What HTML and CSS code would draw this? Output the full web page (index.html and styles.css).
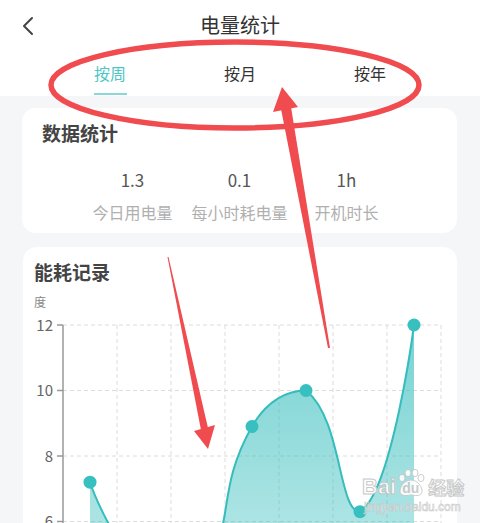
FILE: index.html
```html
<html lang="zh-CN">

<head>
    <meta charset="UTF-8">
    <meta name="viewport" content="width=device-width, initial-scale=1.0">
    <title>电量统计</title>
    <link rel="stylesheet" href="styles.css">
</head>

<body>
    <div class="screen">
        <div class="header">
            <div class="topbar">
                <svg class="back" width="14" height="22" viewBox="0 0 14 22">
                    <polyline points="11,3 3,11 11,19" fill="none" stroke="#444" stroke-width="2" stroke-linecap="round" stroke-linejoin="round" />
                </svg>
                <div class="title">电量统计</div>
            </div>
            <div class="tabs">
                <div class="tab active">按周</div>
                <div class="tab">按月</div>
                <div class="tab">按年</div>
            </div>
        </div>

        <div class="content">
            <div class="card stats-card">
                <div class="card-title">数据统计</div>
                <div class="stats">
                    <div class="stat">
                        <div class="stat-value">1.3</div>
                        <div class="stat-label">今日用电量</div>
                    </div>
                    <div class="stat">
                        <div class="stat-value">0.1</div>
                        <div class="stat-label">每小时耗电量</div>
                    </div>
                    <div class="stat">
                        <div class="stat-value">1h</div>
                        <div class="stat-label">开机时长</div>
                    </div>
                </div>
            </div>

            <div class="card chart-card">
                <div class="card-title">能耗记录</div>
                <div class="unit">度</div>
                <svg class="chart" width="424" height="240" viewBox="11 0 424 240">
                    <defs>
                        <linearGradient id="area" x1="0" y1="0" x2="0" y2="1">
                            <stop offset="0" stop-color="#3cbfbf" stop-opacity="0.7" />
                            <stop offset="1" stop-color="#3cbfbf" stop-opacity="0.3" />
                        </linearGradient>
                    </defs>
                    <!-- grid -->
                    <g stroke="#dcdcdc" stroke-width="1" stroke-dasharray="4 3">
                        <line x1="40" y1="15" x2="418" y2="15" />
                        <line x1="40" y1="80.5" x2="418" y2="80.5" />
                        <line x1="40" y1="146" x2="418" y2="146" />
                        <line x1="40" y1="211.5" x2="418" y2="211.5" />
                        <line x1="94" y1="15" x2="94" y2="240" />
                        <line x1="148" y1="15" x2="148" y2="240" />
                        <line x1="202" y1="15" x2="202" y2="240" />
                        <line x1="256" y1="15" x2="256" y2="240" />
                        <line x1="310" y1="15" x2="310" y2="240" />
                        <line x1="364" y1="15" x2="364" y2="240" />
                        <line x1="418" y1="15" x2="418" y2="240" />
                    </g>
                    <!-- axis -->
                    <g stroke="#999" stroke-width="1.5">
                        <line x1="40" y1="15" x2="40" y2="240" />
                        <line x1="34" y1="15" x2="40" y2="15" />
                        <line x1="34" y1="80.5" x2="40" y2="80.5" />
                        <line x1="34" y1="146" x2="40" y2="146" />
                        <line x1="34" y1="211.5" x2="40" y2="211.5" />
                    </g>
                    <g class="axis-label" text-anchor="end">
                        <text x="30" y="20.5">12</text>
                        <text x="30" y="86">10</text>
                        <text x="30" y="151.5">8</text>
                        <text x="30" y="217">6</text>
                    </g>
                    <!-- series -->
                    <path d="M67,172.2 C67,172.2 85.7,228.5 121,260.6 C139.7,277.6 161.4,288.7 175,270.5 C215.4,216.6 190.4,184.5 229,116.5 C244.4,89.5 265.3,80.5 283,80.5 C319.3,109.1 315.1,201.7 337,201.7 C369.1,182.2 391,15 391,15 L391,300 L67,300 Z" fill="url(#area)" />
                    <path d="M67,172.2 C67,172.2 85.7,228.5 121,260.6 C139.7,277.6 161.4,288.7 175,270.5 C215.4,216.6 190.4,184.5 229,116.5 C244.4,89.5 265.3,80.5 283,80.5 C319.3,109.1 315.1,201.7 337,201.7 C369.1,182.2 391,15 391,15" fill="none" stroke="#35bcbc" stroke-width="2" />
                    <g fill="#38c0c0">
                        <circle cx="67" cy="172.2" r="6.5" />
                        <circle cx="229" cy="116.5" r="6.5" />
                        <circle cx="283" cy="80.5" r="6.5" />
                        <circle cx="337" cy="201.7" r="6.5" />
                        <circle cx="391" cy="15" r="6.5" />
                    </g>
                </svg>
            </div>
        </div>

        <!-- watermark -->
        <div class="watermark">
            <div class="wm-brand">
                <span class="wm-bai">Bai</span>
                <span class="wm-paw">
                    <svg width="30" height="30" viewBox="0 0 30 30">
                        <g fill="#fff" stroke="#c8c8c8" stroke-width="1">
                            <ellipse cx="6" cy="10" rx="3" ry="3.6" />
                            <ellipse cx="12" cy="5" rx="3" ry="3.6" />
                            <ellipse cx="19" cy="5" rx="3" ry="3.6" />
                            <ellipse cx="25" cy="10" rx="3" ry="3.6" />
                            <path d="M15,12 C9,12 4,18 4,23 C4,28 9,28 15,27 C21,28 26,28 26,23 C26,18 21,12 15,12 Z" />
                        </g>
                    </svg>
                    <span class="wm-du">du</span>
                </span>
                <span class="wm-jy">经验</span>
            </div>
            <div class="wm-url">jingyan.baidu.com</div>
        </div>

        <!-- red annotation drawn over the screenshot -->
        <svg class="marks" width="480" height="523" viewBox="0 0 480 523">
            <ellipse cx="235" cy="85" rx="184" ry="43" fill="none" stroke="#f04b4f" stroke-width="5.5" />
            <polygon points="281,109 291,107 330,348 328,348" fill="#f04b4f" />
            <polygon points="282,87 273,112 298,107" fill="#f04b4f" />
            <polygon points="167.5,257 168.5,257 208,428 201,430" fill="#f04b4f" />
            <polygon points="208,449 194,431 215,425" fill="#f04b4f" />
        </svg>
    </div>
</body>

</html>
```

FILE: styles.css
```css
* {
    padding: 0;
    margin: 0;
    box-sizing: border-box;
}

body {
    font-family: "Noto Sans CJK SC", "Noto Sans", sans-serif;
    background-color: #f5f6f8;
    overflow: hidden;
}

.screen {
    position: relative;
    width: 480px;
    height: 523px;
    overflow: hidden;
    background-color: #f5f6f8;
}

.header {
    background-color: #fff;
}

.topbar {
    position: relative;
    height: 50px;
    display: flex;
    align-items: center;
    justify-content: center;
}

.back {
    position: absolute;
    left: 21px;
    top: 15px;
}

.title {
    font-size: 20px;
    line-height: 28px;
    color: #333;
}

.tabs {
    height: 46px;
    display: grid;
    grid-template-columns: repeat(3, 1fr);
    padding: 0 45px;
}

.tab {
    display: flex;
    flex-direction: column;
    align-items: center;
    padding-top: 12px;
    font-size: 16px;
    line-height: 22px;
    color: #333;
}

.tab.active {
    color: #4fc6c6;
}

.tab.active::after {
    content: "";
    width: 33px;
    height: 2px;
    margin-top: 9px;
    background-color: #8ad8d8;
}

.content {
    padding: 12px 23px 0 22px;
}

.card {
    background-color: #fff;
    border-radius: 14px;
}

.card-title {
    font-size: 19px;
    line-height: 26px;
    font-weight: 700;
    color: #444;
}

.stats-card {
    padding: 12px 20px 10px;
    margin-bottom: 14px;
}

.stats {
    display: grid;
    grid-template-columns: repeat(3, 107px);
    justify-content: center;
    margin-top: 22px;
}

.stat {
    text-align: center;
}

.stat-value {
    font-size: 17px;
    line-height: 24px;
    color: #555;
}

.stat-label {
    margin-top: 9px;
    font-size: 16px;
    line-height: 22px;
    color: #b0b0b0;
    white-space: nowrap;
}

.chart-card {
    margin-left: 1px;
    padding: 12px 0 0 11px;
    height: 300px;
}

.unit {
    margin-top: 9px;
    font-size: 12px;
    line-height: 16px;
    color: #888;
}

.chart {
    display: block;
}

.axis-label text {
    font-size: 15px;
    fill: #666;
}

.watermark {
    position: absolute;
    left: 362px;
    top: 468px;
    opacity: 0.9;
}

.wm-brand {
    display: flex;
    align-items: flex-end;
}

.wm-bai,
.wm-jy {
    font-family: "Liberation Sans", sans-serif;
    font-weight: 700;
    font-size: 22px;
    line-height: 26px;
    color: #fff;
    -webkit-text-stroke: 1px #c4c4c4;
}

.wm-jy {
    font-family: "Noto Sans CJK SC", sans-serif;
    font-size: 18px;
    margin-left: 2px;
}

.wm-paw {
    position: relative;
    width: 30px;
    height: 32px;
}

.wm-paw svg {
    display: block;
}

.wm-du {
    position: absolute;
    left: 6px;
    top: 12px;
    font-family: "Liberation Sans", sans-serif;
    font-weight: 700;
    font-size: 14px;
    line-height: 16px;
    color: #c8c8c8;
}

.wm-url {
    font-family: "Liberation Sans", sans-serif;
    font-size: 12px;
    line-height: 14px;
    color: #fff;
    -webkit-text-stroke: 0.6px #c4c4c4;
    margin-left: 2px;
}

.marks {
    position: absolute;
    left: 0;
    top: 0;
    pointer-events: none;
}
```
